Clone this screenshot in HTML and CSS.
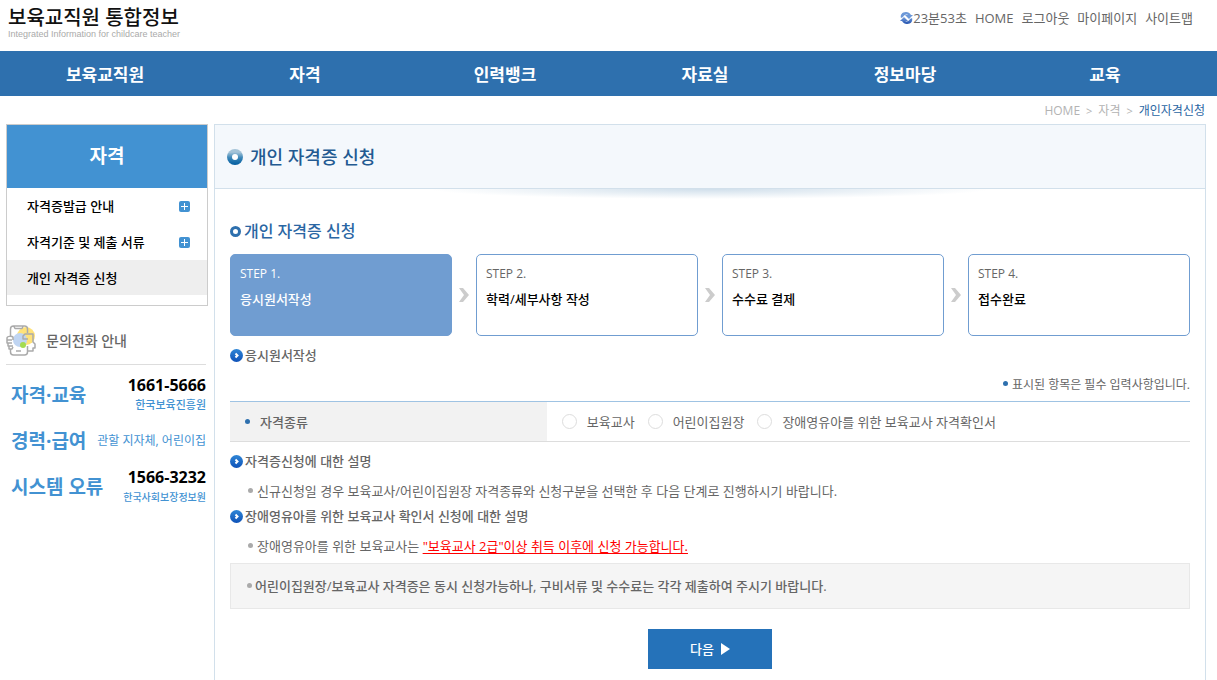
FILE: index.html
```html
<!DOCTYPE html>
<html lang="ko">
<head>
<meta charset="utf-8">
<title>개인 자격증 신청</title>
<link rel="stylesheet" href="styles.css">
</head>
<body>
<svg class="defs" aria-hidden="true">
    <defs>
        <linearGradient id="gBlue" x1="0" y1="0" x2="0" y2="1"><stop offset="0" stop-color="#2f86d6"/><stop offset="1" stop-color="#0f52b8"/></linearGradient>
        <linearGradient id="gRing" x1="0" y1="0" x2="0" y2="1"><stop offset="0.2" stop-color="#a5c4d8"/><stop offset="0.55" stop-color="#3a86b8"/><stop offset="1" stop-color="#005c9f"/></linearGradient>
        <linearGradient id="gSync" x1="0" y1="0" x2="0" y2="1"><stop offset="0" stop-color="#7ba3dd"/><stop offset="1" stop-color="#1f4fae"/></linearGradient>
        <symbol id="play" viewBox="0 0 13 13">
            <circle cx="6.5" cy="6.5" r="6.5" fill="url(#gBlue)"/>
            <path d="M5.500 4.500l2 2-2 2" fill="none" stroke="#fff" stroke-width="2"/>
        </symbol>
        <symbol id="plus" viewBox="0 0 11 11">
            <rect width="11" height="11" rx="2" fill="#4292d2"/>
            <path d="M5.5 2v7M2 5.5h7" stroke="#fff"/>
        </symbol>
        <symbol id="arrow" viewBox="0 0 10 14">
            <path d="M0 0h4l6 7-6 7H0l5-7z" fill="#ccc"/>
        </symbol>
    </defs>
</svg>

<header class="header">
    <a class="logo" href="#">
        <strong>보육교직원 통합정보</strong>
        <span>Integrated Information for childcare teacher</span>
    </a>
    <ul class="util">
        <li>
            <a href="#"><svg class="ico-sync" viewBox="0 0 13 12"><path d="M1 6C0 3 2 0 6 0c2 0 4 1 5 3h2L9 7 5 3h3C6 2 4 3 3 5z" fill="#6c98d8"/><path d="M12 6c1 3-1 6-5 6-2 0-4-1-5-3H0l4-4 4 4H5c2 1 4 0 5-2z" fill="url(#gSync)"/></svg>23분53초</a>
        </li>
        <li><a href="#">HOME</a></li>
        <li><a href="#">로그아웃</a></li>
        <li><a href="#">마이페이지</a></li>
        <li><a href="#">사이트맵</a></li>
    </ul>
</header>

<nav class="gnb">
    <a href="#">보육교직원</a>
    <a href="#">자격</a>
    <a href="#">인력뱅크</a>
    <a href="#">자료실</a>
    <a href="#">정보마당</a>
    <a href="#">교육</a>
</nav>

<div class="location">
    <a href="#">HOME</a>
    <span>&gt;</span>
    <a href="#">자격</a>
    <span>&gt;</span>
    <a class="on" href="#">개인자격신청</a>
</div>

<div class="container">
    <aside class="side">
        <div class="lnb">
            <h2>자격</h2>
            <ul>
                <li><a href="#">자격증발급 안내<svg class="ico-plus"><use href="#plus"/></svg></a></li>
                <li><a href="#">자격기준 및 제출 서류<svg class="ico-plus"><use href="#plus"/></svg></a></li>
                <li class="on"><a href="#">개인 자격증 신청</a></li>
            </ul>
        </div>
        <h3 class="call-title">
            <svg class="ico-call" viewBox="0 0 30 31" fill="none">
                <rect x="4" y="1" width="18" height="29" rx="3" fill="#fff"/>
                <circle cx="20" cy="11" r="9" fill="#ffe27a"/>
                <circle cx="14" cy="15" r="7" fill="#c0d5f2"/>
                <circle cx="17" cy="20" r="3" fill="#a4dc50"/>
                <g stroke="#aaa" stroke-width="1.500" stroke-linejoin="round">
                    <path d="M4.500 11V4c0-2 1-3 3-3h11c2 0 3 1 3 3v4M4.500 24v3c0 2 1 3 3 3h11c2 0 3-1 3-3v-6M8 1.500l1 2h7l1-2M10 26h5"/>
                    <path d="M7 15v-3c-1-1-6-1-6 1v2h5M1 15v3h5M2 18v3h5M3 21v3h3l1-2"/>
                    <path d="M22 14h-5v-3l2-2h8v8l2 2v4h-2v3h-5"/>
                </g>
            </svg>
            문의전화 안내
        </h3>
        <dl class="call">
            <div>
                <dt>자격·교육</dt>
                <dd><strong>1661-5666</strong><span>한국보육진흥원</span></dd>
            </div>
            <div>
                <dt>경력·급여</dt>
                <dd class="text">관할 지자체, 어린이집</dd>
            </div>
            <div>
                <dt>시스템 오류</dt>
                <dd><strong>1566-3232</strong><span class="small">한국사회보장정보원</span></dd>
            </div>
        </dl>
    </aside>

    <main class="content">
        <div class="title">
            <svg class="ico-ring" viewBox="0 0 16 16"><circle cx="8" cy="8" r="8" fill="url(#gRing)"/><circle cx="8" cy="8" r="3" fill="#fff"/></svg>
            <h1>개인 자격증 신청</h1>
        </div>
        <form class="inner">
            <h2 class="subject"><svg class="ico-dot" viewBox="0 0 11 11"><circle cx="5.500" cy="5.500" r="4" fill="#fff" stroke="#2e70ae" stroke-width="3"/></svg>개인 자격증 신청</h2>
            <ol class="steps">
                <li class="step on"><span>STEP 1.</span><strong>응시원서작성</strong></li>
                <li class="next" aria-hidden="true"><svg><use href="#arrow"/></svg></li>
                <li class="step"><span>STEP 2.</span><strong>학력/세부사항 작성</strong></li>
                <li class="next" aria-hidden="true"><svg><use href="#arrow"/></svg></li>
                <li class="step"><span>STEP 3.</span><strong>수수료 결제</strong></li>
                <li class="next" aria-hidden="true"><svg><use href="#arrow"/></svg></li>
                <li class="step"><span>STEP 4.</span><strong>접수완료</strong></li>
            </ol>

            <h3 class="caption"><svg><use href="#play"/></svg>응시원서작성</h3>
            <p class="required">표시된 항목은 필수 입력사항입니다.</p>
            <table class="form">
                <tr>
                    <th scope="row">자격종류</th>
                    <td>
                        <div class="radios">
                            <label><input type="radio" name="kind">보육교사</label>
                            <label><input type="radio" name="kind">어린이집원장</label>
                            <label><input type="radio" name="kind">장애영유아를 위한 보육교사 자격확인서</label>
                        </div>
                    </td>
                </tr>
            </table>

            <h3 class="caption"><svg><use href="#play"/></svg>자격증신청에 대한 설명</h3>
            <p class="desc">신규신청일 경우 보육교사/어린이집원장 자격종류와 신청구분을 선택한 후 다음 단계로 진행하시기 바랍니다.</p>
            <h3 class="caption"><svg><use href="#play"/></svg>장애영유아를 위한 보육교사 확인서 신청에 대한 설명</h3>
            <p class="desc">장애영유아를 위한 보육교사는 <em>"보육교사 2급"이상 취득 이후에 신청 가능합니다.</em></p>
            <p class="notice">어린이집원장/보육교사 자격증은 동시 신청가능하나, 구비서류 및 수수료는 각각 제출하여 주시기 바랍니다.</p>
            <div class="btns">
                <button type="button">다음<svg viewBox="0 0 9 12"><path d="M0 0l9 6-9 6z" fill="#fff"/></svg></button>
            </div>
        </form>
    </main>
</div>
</body>
</html>
```
FILE: styles.css
```css
* {box-sizing: border-box;}
body, h1, h2, h3, p, ul, ol, dl, dd {margin: 0; padding: 0;}
body {display: flex; flex-direction: column; min-height: 100vh; background: #fff; color: #666; font: 13px/20px "Open Sans","Noto Sans CJK KR",sans-serif;}
ul, ol {list-style: none;}
a {color: inherit; text-decoration: none;}
svg {flex: none;}
.defs {position: absolute; width: 0; height: 0;}

/* 상단 */
.header {display: flex; justify-content: space-between; height: 51px; padding: 8px 24px 0 8px;}
.logo {display: flex; flex-direction: column;}
.logo strong {color: #111; font-size: 20px; font-weight: 500; line-height: 20px;}
.logo span {color: #aaa; font: 9px/12px "Liberation Sans",sans-serif;}
.util {display: flex; gap: 8px; font-size: 13px;}
.util li, .util a {display: flex;}
.ico-sync {width: 13px; height: 12px; margin-top: 4px;}

.gnb {display: flex; height: 45px; padding: 0 12px 0 5px; background: #2e70ae;}
.gnb a {flex: 1; color: #fff; font-size: 17px; font-weight: 700; line-height: 48px; text-align: center;}

.location {display: flex; justify-content: flex-end; gap: 6px; height: 28px; padding: 0 12px; color: #b3b3b3; font-size: 12px; line-height: 30px;}
.location span {font-size: 11px;}
.location .on {color: #2a66a3;}

.container {display: flex; flex: 1; gap: 6px; padding: 0 11px 0 6px;}

/* 좌측 메뉴 */
.side {width: 202px;}
.lnb {padding-bottom: 10px; border: 1px solid #ccc;}
.lnb h2 {background: #4292d2; color: #fff; font-size: 19px; font-weight: 700; line-height: 63px; padding-top: 0; text-align: center;}
.lnb li a {display: flex; justify-content: space-between; align-items: center; height: 36px; padding: 0 17px 0 20px; color: #000; font-weight: 500;}
.lnb li.on {background: #eee;}
.lnb li.on a {height: 35px;}
.ico-plus {width: 11px; height: 11px;}
.call-title {display: flex; align-items: center; gap: 10px; margin: 19px 2px 0 0; padding-bottom: 8px; border-bottom: 1px solid #ddd; font-size: 14px; font-weight: 500;}
.ico-call {width: 30px; height: 31px;}
.call {padding: 7px 2px 0 5px;}
.call div {display: flex; justify-content: space-between; align-items: center; height: 46px;}
.call dt {color: #4292d2; font-size: 19px; font-weight: 700;}
.call dd {color: #4292d2; text-align: right;}
.call dd.text {font-size: 12px;}
.call strong {display: block; color: #000; font-size: 16px; font-weight: 700;}
.call span {display: block; font-size: 11px; font-weight: 500;}
.call span.small {font-size: 10px;}

/* 본문 */
.content {flex: 1; border: 1px solid #d2e0eb; border-bottom: 0;}
.title {display: flex; align-items: center; gap: 7px; height: 64px; padding: 0 12px; border-bottom: 1px solid #d2e0eb; background: #f4f8fc; color: #235a91;}
.title h1 {font-size: 18px; font-weight: 500;}
.ico-ring {width: 16px; height: 16px;}
.inner {padding: 32px 15px 10px; background: radial-gradient(ellipse 280px 10px at 50% 0, #d0dfeb, transparent) no-repeat;}
.subject {display: flex; align-items: center; gap: 3px; color: #2a66a3; font-size: 16px; font-weight: 500;}
.ico-dot {width: 11px; height: 11px;}

.steps {display: flex; margin-top: 13px;}
.step {flex: 1; height: 82px; padding: 9px; border: 1px solid #709dd1; border-radius: 5px;}
.step span {display: block; font-size: 12px;}
.step strong {display: block; margin-top: 5px; color: #000; font-weight: 500;}
.step.on {background: #709dd1;}
.step.on span, .step.on strong {color: #fff;}
.next {display: flex; align-items: center; justify-content: center; width: 24px;}
.next svg {width: 10px; height: 14px;}

.caption {display: flex; align-items: center; gap: 2px; margin-top: 9px; font-size: 13px; font-weight: 500;}
.caption svg {width: 13px; height: 13px;}
.required {margin: 10px 0 6px; font-size: 12px; text-align: right;}
.required:before, .form th:before, .desc:before, .notice:before {content: ""; display: inline-block; width: 5px; height: 5px; margin-right: 4px; border-radius: 50%; background: #2e70ae; vertical-align: 3px;}

.form {width: 100%; border-spacing: 0; border-top: 1px solid #9fc3e3; border-bottom: 1px solid #ddd;}
.form th {width: 33%; height: 39px; padding: 0 15px; background: #f2f2f2; font-weight: 500; text-align: left;}
.form th:before {margin-right: 10px;}
.form td {padding: 0 15px;}
.radios {display: flex; gap: 13px;}
.radios label {display: flex; align-items: center; gap: 10px;}
.radios input {appearance: none; width: 15px; height: 15px; margin: 0; border: 1px solid #ddd; border-radius: 50%; background: #fff;}
.radios input:checked {border: 5px solid #2e70ae;}

.desc {margin: 10px 0 5px; padding-left: 18px;}
.desc + .caption {margin-top: 5px;}
.desc:before, .notice:before {background: #aaa;}
.desc em {color: #f00; font-style: normal; text-decoration: underline; text-underline-offset: 2px;}
.notice {margin-top: 7px; padding: 12px 16px; border: 1px solid #e8e8e8; background: #f5f5f5; font-weight: 500;}
.notice:before {margin-right: 3px;}

.btns {display: flex; justify-content: center; margin-top: 20px;}
.btns button {display: flex; align-items: center; justify-content: center; gap: 7px; width: 124px; height: 40px; border: 0; background: #2572b9; color: #fff; font: 500 13px/20px "Open Sans","Noto Sans CJK KR",sans-serif; cursor: pointer;}
.btns svg {width: 9px; height: 12px;}
```
